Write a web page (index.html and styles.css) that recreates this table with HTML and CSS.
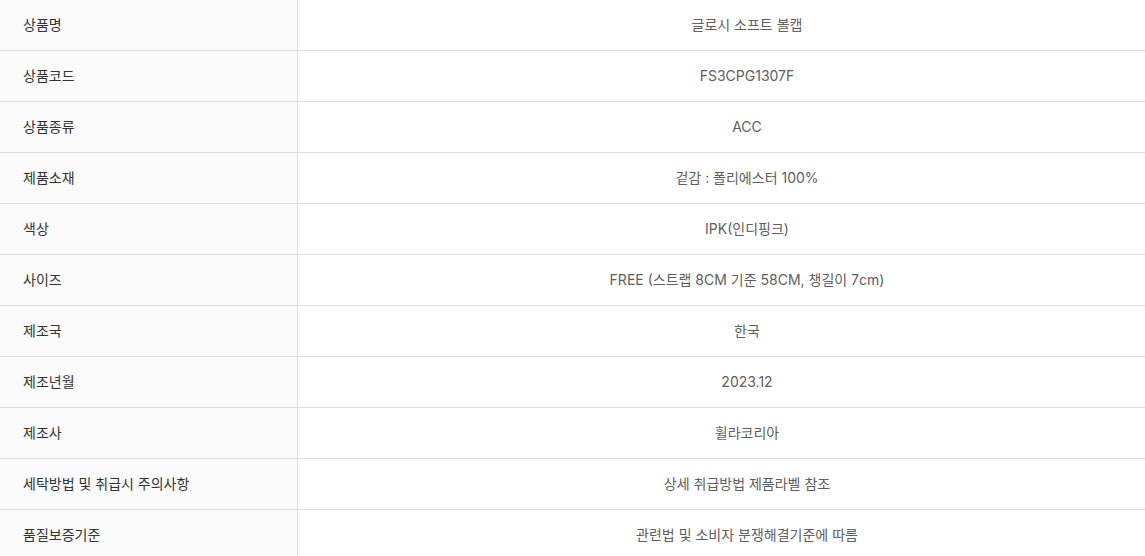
FILE: index.html
```html
<!DOCTYPE html>
<html lang="ko">
<head>
<meta charset="utf-8">
<link rel="stylesheet" href="styles.css">
</head>
<body>
<table class="spec">
  <tbody>
    <tr><th>상품명</th><td>글로시 소프트 볼캡</td></tr>
    <tr><th>상품코드</th><td>FS3CPG1307F</td></tr>
    <tr><th>상품종류</th><td>ACC</td></tr>
    <tr><th>제품소재</th><td>겉감 : 폴리에스터 100%</td></tr>
    <tr><th>색상</th><td>IPK(인디핑크)</td></tr>
    <tr><th>사이즈</th><td>FREE (스트랩 8CM 기준 58CM, 챙길이 7cm)</td></tr>
    <tr><th>제조국</th><td>한국</td></tr>
    <tr><th>제조년월</th><td>2023.12</td></tr>
    <tr><th>제조사</th><td>휠라코리아</td></tr>
    <tr><th>세탁방법 및 취급시 주의사항</th><td>상세 취급방법 제품라벨 참조</td></tr>
    <tr><th>품질보증기준</th><td>관련법 및 소비자 분쟁해결기준에 따름</td></tr>
  </tbody>
</table>
</body>
</html>
```
FILE: styles.css
```css
html, body {
  margin: 0;
  padding: 0;
  background: #fff;
}
body {
  font-family: Inter, "Noto Sans CJK KR", sans-serif;
  font-size: 14px;
  line-height: 20px;
}
.spec {
  width: 100%;
  border-collapse: collapse;
  table-layout: fixed;
}
.spec tr {
  border-bottom: 1px solid #dddddd;
}
.spec th {
  width: 274px;
  height: 50px;
  padding: 0 0 0 23px;
  text-align: left;
  font-weight: 400;
  color: #333;
  background: #fafafa;
  border-right: 1px solid #dddddd;
}
.spec td {
  height: 50px;
  padding: 0 0 0 51px;
  text-align: center;
  color: #606060;
}
```
